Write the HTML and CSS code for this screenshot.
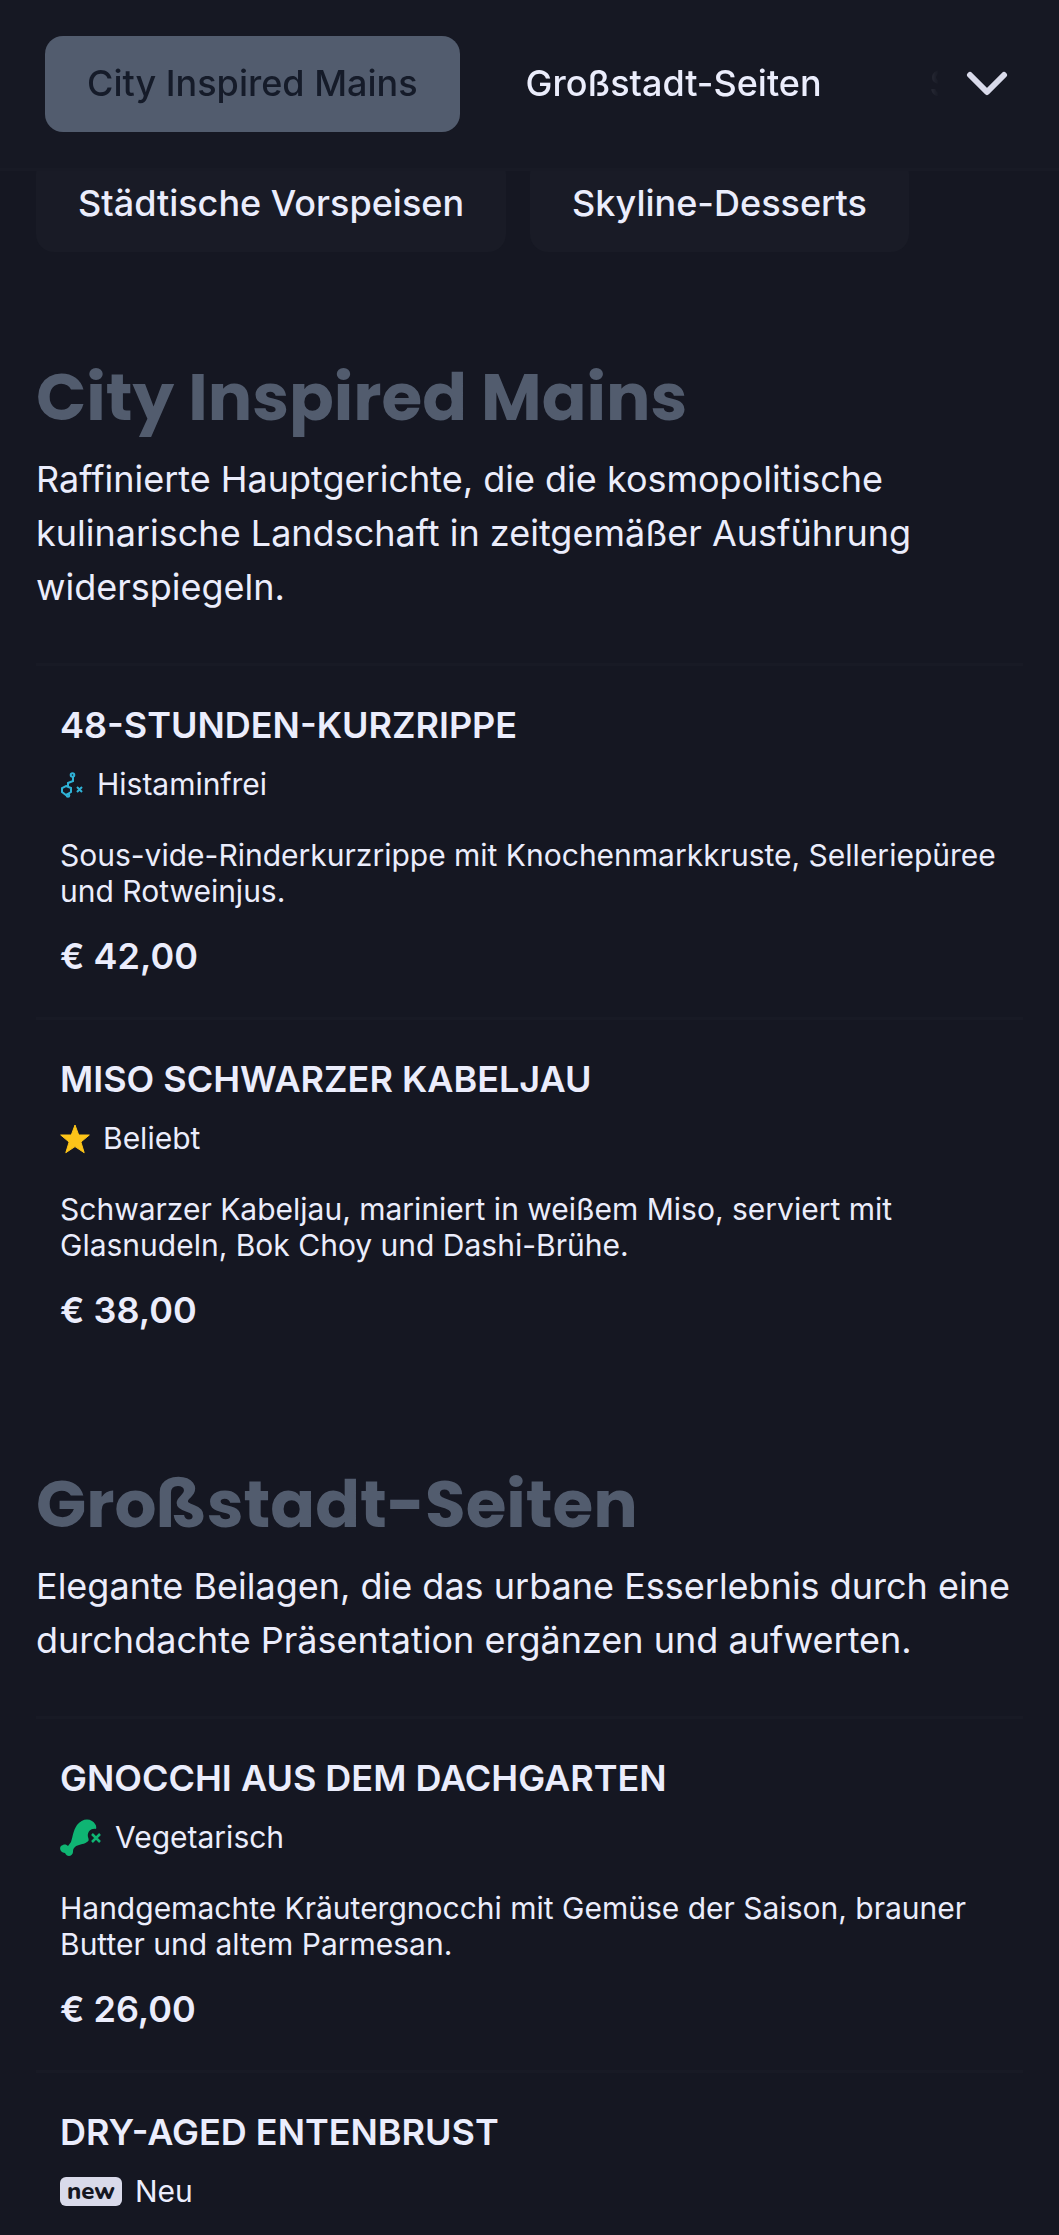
FILE: index.html
```
<!DOCTYPE html>
<html lang="de">
<head>
  <meta charset="UTF-8">
  <meta name="viewport" content="width=device-width, initial-scale=1">
  <title>Speisekarte</title>
  <link rel="stylesheet" href="styles.css">
</head>
<body>
  <header class="topbar">
    <nav class="tabs" aria-label="Kategorien">
      <a class="tab active" href="#mains">City Inspired Mains</a>
      <a class="tab" href="#sides">Großstadt-Seiten</a>
      <a class="tab" href="#starters">Städtische Vorspeisen</a>
    </nav>
    <button class="toggle" type="button" aria-label="Alle Kategorien">
      <svg width="42" height="26" viewBox="0 0 42 26" fill="none" stroke="currentColor" stroke-width="6" stroke-linecap="round" stroke-linejoin="round"><path d="M4 4l17 17L38 4"/></svg>
    </button>
  </header>

  <main class="menu">
    <nav class="chips" aria-label="Weitere Kategorien">
      <a class="chip" href="#starters">Städtische Vorspeisen</a>
      <a class="chip" href="#desserts">Skyline-Desserts</a>
    </nav>

    <section class="category" id="mains">
      <h2>City Inspired Mains</h2>
      <p class="intro">Raffinierte Hauptgerichte, die die kosmopolitische kulinarische Landschaft in zeitgemäßer Ausführung widerspiegeln.</p>

      <article class="item">
        <h3>48-Stunden-Kurzrippe</h3>
        <div class="label">
          <svg class="histamine" width="24" height="26" viewBox="0 0 24 26" fill="none" stroke="currentColor" stroke-width="2"><circle cx="12.500" cy="3" r="1.800"/><path d="M13 5v4l-5 2v3M6 14l5 2v4l-5 3-4-3v-4z"/><circle cx="8" cy="23.500" r="1.300"/><path d="M17 15l5 5M22 15l-5 5"/></svg>
          <span>Histaminfrei</span>
        </div>
        <p class="desc">Sous-vide-Rinderkurzrippe mit Knochenmarkkruste, Selleriepüree und Rotweinjus.</p>
        <p class="price">€ 42,00</p>
      </article>

      <article class="item">
        <h3>Miso Schwarzer Kabeljau</h3>
        <div class="label">
          <svg class="popular" width="30" height="30" viewBox="0 0 30 30" fill="currentColor" stroke="currentColor" stroke-linejoin="round"><path d="M15 1l3.700 10H29.300l-8.400 7 3.300 10.700L15 22.600 5.800 28.700 9.100 18 .7 11h10.600z"/></svg>
          <span>Beliebt</span>
        </div>
        <p class="desc">Schwarzer Kabeljau, mariniert in weißem Miso, serviert mit Glasnudeln, Bok Choy und Dashi-Brühe.</p>
        <p class="price">€ 38,00</p>
      </article>
    </section>

    <section class="category" id="sides">
      <h2>Großstadt-Seiten</h2>
      <p class="intro">Elegante Beilagen, die das urbane Esserlebnis durch eine durchdachte Präsentation ergänzen und aufwerten.</p>

      <article class="item">
        <h3>Gnocchi aus dem Dachgarten</h3>
        <div class="label">
          <svg class="veggie" width="42" height="38" viewBox="0 0 42 38" fill="currentColor"><path d="M11 23C13 17 13 12 17 6c4-5 10-7 15-4 3 2 5 5 4 8-6-1-9 4-8 8 1 3 1 4-1 5-4 3-9 2-12 5-2 2-2 3-2 5 0 4-6 6-8 1-5 0-7-7-2-8 2-1 4 0 5 1z"/><path d="M32 15l8 8M40 15l-8 8" fill="none" stroke="currentColor" stroke-width="2.500"/></svg>
          <span>Vegetarisch</span>
        </div>
        <p class="desc">Handgemachte Kräutergnocchi mit Gemüse der Saison, brauner Butter und altem Parmesan.</p>
        <p class="price">€ 26,00</p>
      </article>

      <article class="item">
        <h3>Dry-Aged Entenbrust</h3>
        <div class="label">
          <span class="new">new</span>
          <span>Neu</span>
        </div>
      </article>
    </section>
  </main>
</body>
</html>
```
FILE: styles.css
```
* {
  box-sizing: border-box;
}
body {
  margin: 0;
  background: #151722;
  color: #ebedfc;
  font-family: Inter, "Liberation Sans", sans-serif;
  font-size: 36px;
  line-height: 54px;
}
a {
  color: inherit;
  text-decoration: none;
}
h2, h3, p {
  margin: 0;
}
.topbar {
  position: fixed;
  top: 0;
  left: 0;
  right: 0;
  z-index: 1;
  display: flex;
  align-items: center;
  padding: 36px 45px;
  background: #161823;
  border-bottom: 3px solid #181a25;
}
.tabs {
  display: flex;
  flex: 1;
  gap: 24px;
  overflow: hidden;
  mask-image: linear-gradient(to right, #000 calc(100% - 96px), transparent);
}
.tab, .chip {
  flex: none;
  padding: 20px 42px 22px;
  border-radius: 18px;
  font-weight: 500;
  white-space: nowrap;
}
.tab.active {
  background: #525c6e;
  color: #151b29;
}
.toggle {
  display: flex;
  margin: 0 6px 0 27px;
  padding: 0;
  border: 0;
  background: none;
  color: #d9daea;
  cursor: pointer;
}
.menu {
  padding: 156px 36px 0;
}
.chips {
  display: flex;
  flex-wrap: wrap;
  gap: 24px;
  margin-bottom: 105px;
}
.chip {
  background: #191b26;
}
.category {
  margin-bottom: 93px;
}
.category:last-child {
  margin-bottom: 0;
}
h2 {
  margin-bottom: 14px;
  color: #525c6e;
  font-family: Poppins, Inter, sans-serif;
  font-size: 66px;
  font-weight: 700;
  line-height: 81px;
}
.intro {
  margin-bottom: 49px;
}
.item {
  padding: 32px 24px 34px;
  border-top: 3px solid #181a25;
}
h3 {
  font-size: 36px;
  font-weight: 600;
  text-transform: uppercase;
}
.label {
  display: flex;
  align-items: center;
  gap: 13px;
  margin: 10px 0 30px;
  font-size: 30px;
  line-height: 45px;
}
.histamine {
  color: #2fb2d6;
}
.popular {
  color: #fcc419;
}
.veggie {
  color: #0fb573;
}
.new {
  padding: 0 7px;
  border-radius: 6px;
  background: #d9daea;
  color: #151722;
  font-family: Nunito, Lato, sans-serif;
  font-size: 24px;
  font-weight: 800;
  line-height: 29px;
}
.desc {
  margin-bottom: 20px;
  font-size: 30px;
  line-height: 36px;
}
.price {
  font-weight: 600;
}
```
